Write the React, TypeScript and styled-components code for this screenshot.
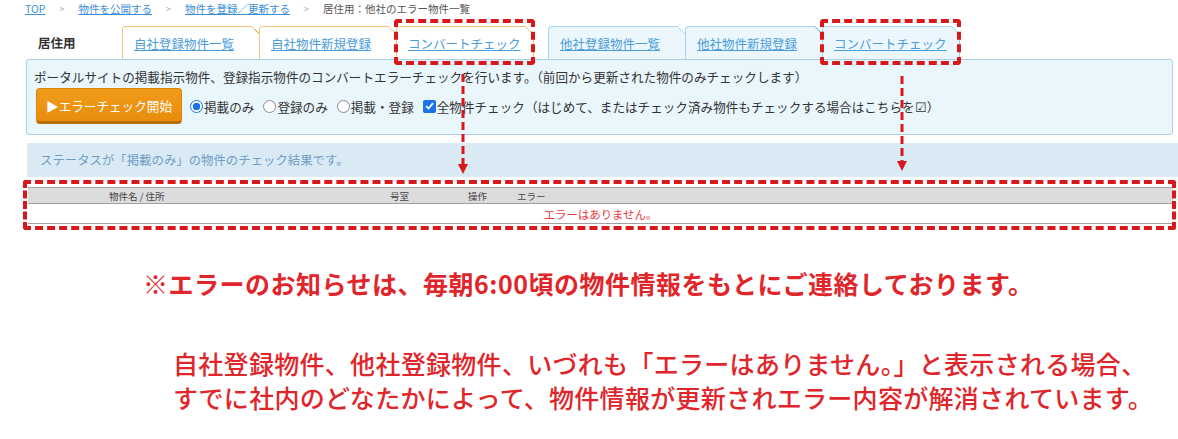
import React from 'react';
import styled, { createGlobalStyle } from 'styled-components';

const GlobalStyle = createGlobalStyle`
  html, body {
    margin: 0;
    padding: 0;
    background: #fff;
  }
  body {
    font-family: "Noto Sans CJK JP", "Noto Sans", sans-serif;
    color: #333;
  }
`;

const MARK_RED = '#d7191c';

const Page = styled.div`
  position: relative;
  width: 1178px;
  height: 439px;
  overflow: hidden;
`;

const Screen = styled.div`
  display: flex;
  flex-direction: column;
  padding: 0 5px 0 26px;
`;

const Breadcrumb = styled.nav`
  display: flex;
  align-items: center;
  height: 17px;
  margin-left: -1px;
  font-size: 10.5px;
  line-height: 17px;
  color: #555;
`;

const Crumb = styled.a`
  color: #3b8ed6;
  text-decoration: underline;
  cursor: pointer;
`;

const Sep = styled.span`
  margin: 0 14px;
  color: #aaa;
  font-size: 9px;
`;

const TabBar = styled.div`
  display: flex;
  align-items: flex-end;
  height: 33px;
  margin-top: 9px;
`;

const TabLabel = styled.div`
  width: 96px;
  box-sizing: border-box;
  padding-left: 12px;
  align-self: center;
  font-size: 12.5px;
  font-weight: 700;
  color: #333;
`;

const TabGroup = styled.div`
  display: flex;
  & + & {
    margin-left: 14px;
  }
`;

const Tab = styled.div<{ $tone: 'orange' | 'blue'; $marked?: boolean }>`
  position: relative;
  width: 138px;
  height: 33px;
  box-sizing: border-box;
  display: flex;
  align-items: center;
  padding-left: 11px;
  border: 1px solid ${p => (p.$tone === 'orange' ? '#f4c27c' : '#a9d3ef')};
  border-bottom: none;
  border-top-left-radius: 4px;
  background: ${p => (p.$tone === 'orange' ? '#fff' : '#ecf7fd')};

  & + & {
    margin-left: -1px;
  }

  /* dog-ear fold on the top right corner */
  &::before {
    content: '';
    position: absolute;
    top: -1px;
    right: -1px;
    width: 8px;
    height: 8px;
    background: linear-gradient(
      to bottom left,
      #fff 0 50%,
      ${p => (p.$tone === 'orange' ? '#f4c27c' : '#a9d3ef')} 50% calc(50% + 1px),
      transparent calc(50% + 1px)
    );
  }

  ${p =>
    p.$marked &&
    `
    &::after {
      content: '';
      position: absolute;
      top: -8px;
      left: -3px;
      right: -2px;
      bottom: -6px;
      border: 4px dashed ${MARK_RED};
      border-radius: 4px;
      pointer-events: none;
    }
  `}
`;

const TabLink = styled.a`
  font-size: 12.5px;
  color: #4a9cdb;
  text-decoration: underline;
  cursor: pointer;
  white-space: nowrap;
`;

const InfoBox = styled.div`
  border: 1px solid #a9cfea;
  border-radius: 3px;
  background: #e9f6fc;
  padding: 8px 8px 10px 7px;
`;

const InfoText = styled.div`
  font-size: 12.6px;
  line-height: 18px;
  color: #333;
  white-space: nowrap;
`;

const Controls = styled.div`
  display: flex;
  align-items: center;
  margin-top: 2px;
  font-size: 12.6px;
  color: #333;
  white-space: nowrap;
`;

const StartButton = styled.button`
  width: 146px;
  height: 36px;
  margin: 0 8px 0 2px;
  border: 1px solid #dd8606;
  border-bottom: 3px solid #b96f06;
  border-radius: 4px;
  background: linear-gradient(#f29c1c, #e88c0c);
  color: #fff;
  font-family: inherit;
  font-size: 12.6px;
  cursor: pointer;
`;

const Choice = styled.label`
  display: flex;
  align-items: center;
  & + & {
    margin-left: 9px;
  }
`;

const Radio = styled.span<{ $checked?: boolean }>`
  width: 13px;
  height: 13px;
  box-sizing: border-box;
  border-radius: 50%;
  border: 1px solid ${p => (p.$checked ? '#1a73e8' : '#8a8a8a')};
  background: ${p => (p.$checked ? 'radial-gradient(circle, #1a73e8 0 3.5px, #fff 4px)' : '#fff')};
  margin-right: 1px;
`;

const Check = styled.span`
  width: 13px;
  height: 13px;
  border-radius: 2px;
  background: #1a73e8;
  display: flex;
  align-items: center;
  justify-content: center;
  margin-right: 1px;
`;

const StatusBar = styled.div`
  height: 34px;
  margin: 8px -10px 0 1px;
  padding-left: 13px;
  display: flex;
  align-items: center;
  background: #d9eaf5;
  color: #6f9cc6;
  font-size: 12.4px;
`;

const ResultTable = styled.div`
  position: relative;
  margin: 10px 0 0 2px;

  &::after {
    content: '';
    position: absolute;
    top: -7px;
    left: -5px;
    right: -3px;
    bottom: -6px;
    border: 4px dashed ${MARK_RED};
    border-radius: 3px;
    pointer-events: none;
  }
`;

const HeadRow = styled.div`
  display: grid;
  grid-template-columns: 362px 78px 49px 1fr;
  height: 17px;
  align-items: center;
  background: #dcdcdc;
  border-top: 1px solid #a0a0a0;
  border-bottom: 1px solid #a0a0a0;
  box-sizing: border-box;
  font-size: 9.5px;
  color: #444;
`;

const HeadCell = styled.div<{ $indent?: number }>`
  padding-left: ${p => p.$indent ?? 0}px;
`;

const EmptyRow = styled.div`
  height: 19px;
  display: flex;
  align-items: center;
  justify-content: center;
  border-bottom: 1px solid #a0a0a0;
  color: #e8383d;
  font-size: 11.4px;
`;

const Arrows = styled.svg`
  position: absolute;
  top: 0;
  left: 0;
  pointer-events: none;
`;

const Notice = styled.div`
  margin-top: 42px;
  padding-left: 143px;
  color: #e0262b;
  font-size: 25px;
  font-weight: 700;
  letter-spacing: 0.5px;
  line-height: 34px;
  white-space: nowrap;
`;

const Explanation = styled.div`
  margin-top: 46px;
  padding-left: 173px;
  color: #e0262b;
  font-size: 25px;
  font-weight: 500;
  letter-spacing: 0.3px;
  line-height: 34px;
  white-space: nowrap;
`;

const Arrow: React.FC<{ x: number; from: number; to: number }> = ({ x, from, to }) => (
  <g>
    <line x1={x} y1={from} x2={x} y2={to - 9} stroke={MARK_RED} strokeWidth={3} strokeDasharray="8 4" />
    <polygon points={`${x - 5},${to - 10} ${x + 5},${to - 10} ${x},${to}`} fill={MARK_RED} />
  </g>
);

const App: React.FC = () => {
  return (
    <Page>
      <GlobalStyle />
      <Screen>
        <Breadcrumb>
          <Crumb>TOP</Crumb>
          <Sep>&gt;</Sep>
          <Crumb>物件を公開する</Crumb>
          <Sep>&gt;</Sep>
          <Crumb>物件を登録／更新する</Crumb>
          <Sep>&gt;</Sep>
          <span>居住用：他社のエラー物件一覧</span>
        </Breadcrumb>

        <TabBar>
          <TabLabel>居住用</TabLabel>
          <TabGroup>
            <Tab $tone="orange"><TabLink>自社登録物件一覧</TabLink></Tab>
            <Tab $tone="orange"><TabLink>自社物件新規登録</TabLink></Tab>
            <Tab $tone="orange" $marked><TabLink>コンバートチェック</TabLink></Tab>
          </TabGroup>
          <TabGroup>
            <Tab $tone="blue"><TabLink>他社登録物件一覧</TabLink></Tab>
            <Tab $tone="blue"><TabLink>他社物件新規登録</TabLink></Tab>
            <Tab $tone="blue" $marked><TabLink>コンバートチェック</TabLink></Tab>
          </TabGroup>
        </TabBar>

        <InfoBox>
          <InfoText>
            ポータルサイトの掲載指示物件、登録指示物件のコンバートエラーチェックを行います。（前回から更新された物件のみチェックします）
          </InfoText>
          <Controls>
            <StartButton>▶エラーチェック開始</StartButton>
            <Choice><Radio $checked />掲載のみ</Choice>
            <Choice><Radio />登録のみ</Choice>
            <Choice><Radio />掲載・登録</Choice>
            <Choice>
              <Check>
                <svg width="9" height="8" viewBox="0 0 9 8">
                  <path d="M1 4.2 L3.5 6.5 L8 1.2" stroke="#fff" strokeWidth="1.8" fill="none" />
                </svg>
              </Check>
              全物件チェック（はじめて、またはチェック済み物件もチェックする場合はこちらを☑）
            </Choice>
          </Controls>
        </InfoBox>

        <StatusBar>ステータスが「掲載のみ」の物件のチェック結果です。</StatusBar>

        <ResultTable>
          <HeadRow>
            <HeadCell $indent={81}>物件名 / 住所</HeadCell>
            <HeadCell>号室</HeadCell>
            <HeadCell>操作</HeadCell>
            <HeadCell>エラー</HeadCell>
          </HeadRow>
          <EmptyRow>エラーはありません。</EmptyRow>
        </ResultTable>
      </Screen>

      <Notice>※エラーのお知らせは、毎朝6:00頃の物件情報をもとにご連絡しております。</Notice>
      <Explanation>
        自社登録物件、他社登録物件、いづれも「エラーはありません。」と表示される場合、
        <br />
        すでに社内のどなたかによって、物件情報が更新されエラー内容が解消されています。
      </Explanation>

      <Arrows width={1178} height={240}>
        <Arrow x={463} from={74} to={174} />
        <Arrow x={902} from={76} to={171} />
      </Arrows>
    </Page>
  );
};

export default App;
